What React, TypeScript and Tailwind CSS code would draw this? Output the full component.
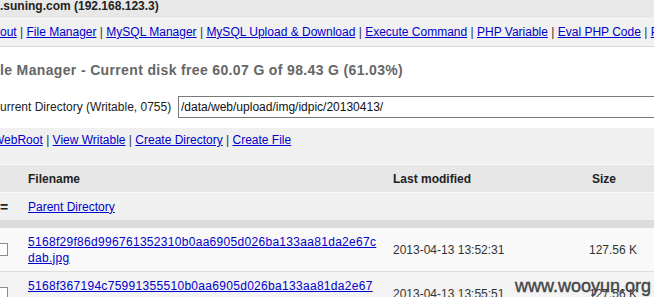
const navLinks = [
  "out",
  "File Manager",
  "MySQL Manager",
  "MySQL Upload & Download",
  "Execute Command",
  "PHP Variable",
  "Eval PHP Code",
  "Port Scan",
];

const toolLinks = ["View Writable", "Create Directory", "Create File"];

const files = [
  {
    lines: ["5168f29f86d996761352310b0aa6905d026ba133aa81da2e67c", "dab.jpg"],
    modified: "2013-04-13 13:52:31",
    size: "127.56 K",
    bg: "bg-[#f9f9f9]",
  },
  {
    lines: ["5168f367194c75991355510b0aa6905d026ba133aa81da2e67", "c3bd.jpg"],
    modified: "2013-04-13 13:55:51",
    size: "127.56 K",
    bg: "bg-[#f3f3f3]",
  },
];

const Sep = () => <span className="text-[#333]"> | </span>;

const Checkbox = () => (
  <span className="-ml-[5px] block w-[13px] h-[13px] border border-[#8c8c8c] bg-white" />
);

export default function App() {
  return (
    <div className="relative w-[654px] h-[297px] overflow-hidden bg-white font-['Liberation_Sans',Arial,sans-serif] text-[12px] text-[#222]">
      {/* top bar */}
      <div className="h-[18px] bg-[#e8e8e8] whitespace-nowrap font-bold leading-[13px] text-[#222]">
        .suning.com (192.168.123.3)
      </div>

      {/* nav */}
      <div className="h-[29px] border-t border-b border-t-[#fafafa] border-b-[#d9d9d9] bg-[#f1f1f1] pt-[6px] leading-[14px] whitespace-nowrap">
        {navLinks.map((l, i) => (
          <span key={l}>
            {i > 0 && <Sep />}
            <a href="#" className="text-[#0000cc] underline">
              {l}
            </a>
          </span>
        ))}
      </div>

      {/* title + current dir */}
      <div className="pt-[15px] pb-[10px]">
        <div className="leading-[16px] text-[14px] tracking-[0.35px] font-bold text-[#666] whitespace-nowrap">
          le Manager - Current disk free 60.07 G of 98.43 G (61.03%)
        </div>
        <div className="mt-[18px] flex items-center whitespace-nowrap">
          <span className="w-[178px] shrink-0 leading-[14px] text-[#222]">urrent Directory (Writable, 0755)</span>
          <input
            readOnly
            value="/data/web/upload/img/idpic/20130413/"
            className="h-[22px] w-[520px] shrink-0 border border-[#7a7a7a] bg-white px-[2px] text-[12px] text-[#111] outline-none"
          />
        </div>
      </div>

      {/* tools */}
      <div className="h-[37px] border-b border-[#fafafa] bg-[#f0f0f0] pt-[5px] leading-[14px] whitespace-nowrap">
        <a href="#" className="-ml-[7px] text-[#0000cc] underline">
          WebRoot
        </a>
        {toolLinks.map((l) => (
          <span key={l}>
            <Sep />
            <a href="#" className="text-[#0000cc] underline">
              {l}
            </a>
          </span>
        ))}
      </div>

      {/* table header */}
      <div className="flex h-[28px] items-center border-b border-[#fafafa] bg-[#e7e7e7] font-bold leading-[14px] text-[#222]">
        <div className="w-[28px]" />
        <div className="w-[365px]">Filename</div>
        <div className="w-[199px]">Last modified</div>
        <div>Size</div>
      </div>

      {/* parent dir */}
      <div className="flex h-[27px] items-center bg-[#f0f0f0] leading-[14px]">
        <div className="w-[28px] text-[14px] font-bold leading-[14px] text-[#222]">=</div>
        <a href="#" className="text-[#0000cc] underline">
          Parent Directory
        </a>
      </div>
      <div className="h-[8px] bg-[#dcdcdc]" />

      {/* files */}
      {files.map((f) => (
        <div key={f.modified} className={`flex h-[44px] items-center border-b border-[#dedede] ${f.bg}`}>
          <div className="w-[28px]">
            <Checkbox />
          </div>
          <div className="w-[365px] leading-[16px] tracking-[0.3px]">
            {f.lines.map((t) => (
              <div key={t}>
                <a href="#" className="text-[#0000cc] underline">
                  {t}
                </a>
              </div>
            ))}
          </div>
          <div className="w-[196px] leading-[14px] text-[#333]">{f.modified}</div>
          <div className="leading-[14px] text-[#333]">{f.size}</div>
        </div>
      ))}

      {/* watermark */}
      <div className="absolute left-[515px] top-[277px] text-[18px] leading-[18px] text-[#444] [-webkit-text-stroke:0.4px_#444] whitespace-nowrap">
        www.wooyun.org
      </div>
    </div>
  );
}
